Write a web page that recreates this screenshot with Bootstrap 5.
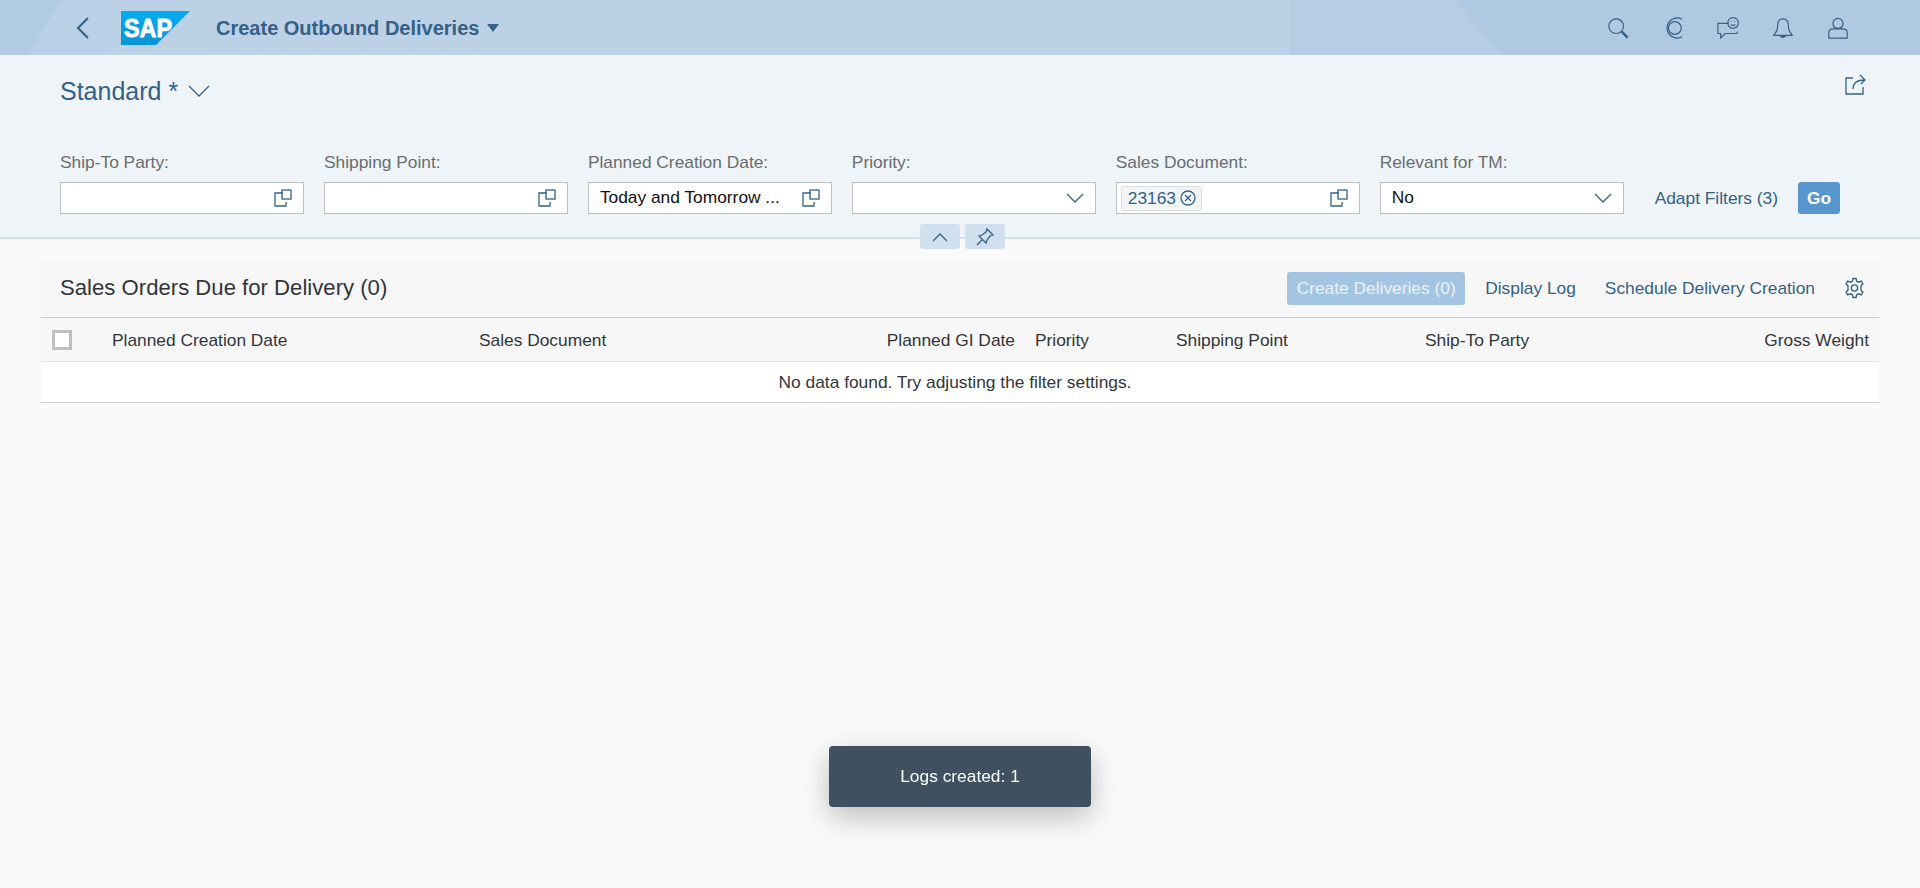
<!DOCTYPE html>
<html lang="en">
  <head>
    <meta charset="UTF-8" />
    <title>Create Outbound Deliveries</title>
    <link href="https://cdn.jsdelivr.net/npm/bootstrap@5.3.0/dist/css/bootstrap.min.css" rel="stylesheet" />
    <style>
      body {
        font-family: "Liberation Sans", Arial, sans-serif;
        font-size: 17.35px;
        background: #fafafa;
        color: #32363a;
        height: 888px;
        overflow: hidden;
      }
      svg { display: block; fill: none; stroke: #346187; stroke-width: 1.3; }
      /* shell */
      .shell-bar {
        height: 55px;
        background:
          linear-gradient(47.7deg, transparent 1112px, #b0c9e2 1112px),
          linear-gradient(121deg, #b1cbe3 52px, transparent 52px),
          linear-gradient(90deg, #bad0e6 106px, transparent 106px, transparent 1290px, #b7cde4 1290px),
          #bdd1e6;
      }
      .shell-back { margin-left: 73px; width: 20px; }
      .shell-logo { margin-left: 28px; width: 69px; }
      .shell-title { margin-left: 26px; font-size: 20px; font-weight: 700; color: #346187; }
      .shell-caret { margin-left: 8px; width: 0; height: 0; border: 6px solid transparent; border-top: 8px solid #346187; border-bottom: 0; }
      .shell-icons { margin-left: auto; margin-right: 71px; gap: 33px; }
      .shell-icons svg { width: 22px; height: 22px; }
      /* filter bar */
      .filter-bar { height: 184px; padding: 0 80px 0 60px; background: #eff4f9; border-bottom: 2px solid #d1e0ef; position: relative; }
      .variant-row { height: 70px; padding-top: 19px; }
      .variant-name { font-size: 25px; color: #346187; line-height: 34px; }
      .variant-caret { margin: 10px 0 0 10px; }
      .share-btn { margin-left: auto; margin-right: -26px; }
      .filter-row { margin-top: 24px; gap: 20px; }
      .filter-item { width: 244px; }
      .filter-label { line-height: 26px; color: #6a6d70; height: 33px; }
      .filter-box { height: 32px; background: #fff; border: 1px solid #bfbfbf; padding: 0 11px 0 11px; color: #111; }
      .filter-box svg { margin-left: auto; flex: none; }
      .filter-value { margin-top: -2px; }
      .token { height: 25px; margin-left: -7px; padding: 0 5px 0 6px; background: #f2f5f8; border: 1px solid #dcdfe2; border-radius: 2px; color: #346187; gap: 4px; }
      .token svg { margin-left: 0; }
      .filters-link { color: #346187; margin-left: 11px; margin-top: 33px; height: 32px; line-height: 32px; white-space: nowrap; }
      .go-btn { margin-top: 33px; width: 42px; height: 32px; padding: 0; background: #5496cd; border: 1px solid #5496cd; color: #fff; font-size: 17.35px; font-weight: 700; border-radius: 3px; }
      .collapse-tools { position: absolute; left: 920px; top: 169px; gap: 5px; }
      .collapse-tool { width: 40px; height: 25px; background: #d1e0ef; border-radius: 3px; }
      /* table */
      .result-panel { margin: 20px 41px 0; }
      .result-toolbar { height: 59px; background: #f7f7f7; padding: 0 14px 0 19px; border-bottom: 1px solid #c8c8c8; }
      .result-title { font-size: 22.15px; color: #32363a; margin-top: -1px; }
      .result-actions { margin-left: auto; }
      .create-btn { height: 33px; width: 178px; padding: 0; background: #a3c5e1; border: 1px solid #a3c5e1; color: #eaf2f8; font-size: 17.35px; border-radius: 3px; }
      .result-link { color: #346187; margin-left: 20px; }
      .result-link-wide { margin-left: 29px; }
      .gear-wrap { margin-left: 29px; }
      .result-table { table-layout: fixed; width: 1838px; margin: 0; }
      .result-table th, .result-table td { height: 43px; padding: 2px 12px 0; vertical-align: middle; font-weight: 400; font-size: 17.35px; color: #32363a; }
      .result-table th { background: #f7f7f7; border-bottom: 1px solid #e5e5e5; }
      .result-table td { height: 41px; padding-right: 22px; background: #fff; text-align: center; border-bottom: 1px solid #d0d0d0; }
      .result-table th.col-date { padding-right: 8px; text-align: right; }
      .result-table th.col-weight { padding-right: 10px; text-align: right; }
      .result-table th.col-check { padding-left: 11px; }
      .check-box { width: 20px; height: 20px; background: #fff; border: 3px solid #bfbfbf; }
      /* toast */
      .log-toast { position: fixed; left: 829px; top: 746px; width: 262px; height: 61px; background: #3f5161; color: #fff; border-radius: 4px; box-shadow: 0 10px 30px rgba(0,0,0,.25); }
    </style>
  </head>
  <body>
    <!-- Shell header -->
    <header class="shell-bar d-flex align-items-center">
      <div class="shell-back">
        <svg width="18" height="24" viewBox="0 0 18 24" style="stroke-width:2.2"><path d="M15 2 L5 12 L15 22" /></svg>
      </div>
      <div class="shell-logo">
        <svg width="69" height="34" viewBox="0 0 69 34" style="stroke:none">
          <defs>
            <linearGradient id="sapBlue" x1="0" y1="0" x2="0" y2="1">
              <stop offset="0" stop-color="#00aeef" />
              <stop offset="1" stop-color="#0a92d6" />
            </linearGradient>
          </defs>
          <polygon points="0,0 69,0 35,34 0,34" fill="url(#sapBlue)" />
          <text x="3" y="26" font-family="Liberation Sans" font-weight="700" font-size="25" fill="#fff" stroke="#fff" stroke-width="0.9" textLength="48" lengthAdjust="spacingAndGlyphs">SAP</text>
        </svg>
      </div>
      <span class="shell-title">Create Outbound Deliveries</span>
      <span class="shell-caret"></span>
      <div class="shell-icons d-flex">
        <svg viewBox="0 0 24 24"><circle cx="10" cy="10" r="8" /><path d="M16 16 L22.5 22.5" style="stroke-width:2.6" /></svg>
        <svg viewBox="0 0 24 24"><path d="M22 2.5 A11 11 0 1 0 22 21.5" /><circle cx="14" cy="12" r="7" /></svg>
        <svg viewBox="0 0 24 24"><path d="M13 7 H1 V18 H4 V23 L9 18 H22 V16" /><circle cx="17.5" cy="6.5" r="5.8" /><path d="M15 8 Q17.5 10.5 20 8 M15.5 4.5 V5.5 M19.5 4.5 V5.5" /></svg>
        <svg viewBox="0 0 24 24"><path d="M12 2 C6 2 6 8 6 12 C6 15 4 17 2 20 H22 C20 17 18 15 18 12 C18 8 18 2 12 2 Z" /><path d="M9 20.5 Q12 24 15 20.5 Z" fill="#346187" /></svg>
        <svg viewBox="0 0 24 24"><circle cx="12" cy="7" r="5.5" /><path d="M2 23 V17 Q2 13 7 13 H17 Q22 13 22 17 V23 Z" /></svg>
      </div>
    </header>

    <!-- Filter bar -->
    <section class="filter-bar">
      <div class="variant-row d-flex">
        <span class="variant-name">Standard *</span>
        <svg class="variant-caret" width="22" height="14" viewBox="0 0 22 14"><path d="M1 2 L11 12 L21 2" /></svg>
        <svg class="share-btn" width="21" height="21" viewBox="0 0 21 21"><path d="M8 4 H1 V20 H18 V13" /><path d="M8 15 C8 9 12 6 20 6 M15 1 L20 6 L16 10" /></svg>
      </div>
      <div class="filter-row d-flex align-items-start">
        <div class="filter-item">
          <div class="filter-label">Ship-To Party:</div>
          <div class="filter-box d-flex align-items-center">
            <svg width="18" height="18" viewBox="0 0 18 18"><path d="M9 4 H1 V17 H12 V13" /><rect x="8" y="1" width="9" height="9" /></svg>
          </div>
        </div>
        <div class="filter-item">
          <div class="filter-label">Shipping Point:</div>
          <div class="filter-box d-flex align-items-center">
            <svg width="18" height="18" viewBox="0 0 18 18"><path d="M9 4 H1 V17 H12 V13" /><rect x="8" y="1" width="9" height="9" /></svg>
          </div>
        </div>
        <div class="filter-item">
          <div class="filter-label">Planned Creation Date:</div>
          <div class="filter-box d-flex align-items-center">
            <span class="filter-value">Today and Tomorrow ...</span>
            <svg width="18" height="18" viewBox="0 0 18 18"><path d="M9 4 H1 V17 H12 V13" /><rect x="8" y="1" width="9" height="9" /></svg>
          </div>
        </div>
        <div class="filter-item">
          <div class="filter-label">Priority:</div>
          <div class="filter-box d-flex align-items-center">
            <svg width="18" height="12" viewBox="0 0 18 12"><path d="M1 2 L9 10 L17 2" /></svg>
          </div>
        </div>
        <div class="filter-item">
          <div class="filter-label">Sales Document:</div>
          <div class="filter-box d-flex align-items-center">
            <span class="token d-flex align-items-center">23163
              <svg width="16" height="16" viewBox="0 0 16 16"><circle cx="8" cy="8" r="7" /><path d="M5 5 L11 11 M11 5 L5 11" /></svg>
            </span>
            <svg width="18" height="18" viewBox="0 0 18 18"><path d="M9 4 H1 V17 H12 V13" /><rect x="8" y="1" width="9" height="9" /></svg>
          </div>
        </div>
        <div class="filter-item">
          <div class="filter-label">Relevant for TM:</div>
          <div class="filter-box d-flex align-items-center">
            <span class="filter-value">No</span>
            <svg width="18" height="12" viewBox="0 0 18 12"><path d="M1 2 L9 10 L17 2" /></svg>
          </div>
        </div>
        <span class="filters-link">Adapt Filters (3)</span>
        <button class="go-btn btn" type="button">Go</button>
      </div>
      <div class="collapse-tools d-flex">
        <div class="collapse-tool d-flex align-items-center justify-content-center">
          <svg width="16" height="10" viewBox="0 0 16 10"><path d="M1 9 L8 2 L15 9" /></svg>
        </div>
        <div class="collapse-tool d-flex align-items-center justify-content-center">
          <svg width="18" height="18" viewBox="0 0 18 18"><path d="M11 1 L17 7 L14 8 L11 12 L10 15 L3 8 L6 7 L10 4 Z M6 12 L1 17" /></svg>
        </div>
      </div>
    </section>

    <!-- Result table -->
    <main class="result-panel">
      <div class="result-toolbar d-flex align-items-center">
        <span class="result-title">Sales Orders Due for Delivery (0)</span>
        <div class="result-actions d-flex align-items-center">
          <button class="create-btn btn" type="button">Create Deliveries (0)</button>
          <span class="result-link">Display Log</span>
          <span class="result-link result-link-wide">Schedule Delivery Creation</span>
          <span class="gear-wrap">
            <svg width="21" height="22" viewBox="0 0 20 20"><circle cx="10" cy="10" r="3" /><path d="M8.5 1 H11.5 L12 3.5 L14 4.5 L16.5 3.5 L18 6 L16.2 8 V12 L18 14 L16.5 16.5 L14 15.5 L12 16.5 L11.5 19 H8.5 L8 16.5 L6 15.5 L3.5 16.5 L2 14 L3.8 12 V8 L2 6 L3.5 3.5 L6 4.5 L8 3.5 Z" /></svg>
          </span>
        </div>
      </div>
      <table class="table result-table">
        <colgroup>
          <col style="width: 59px" /><col style="width: 367px" /><col style="width: 353px" /><col style="width: 203px" /><col style="width: 141px" /><col style="width: 249px" /><col style="width: 227px" /><col style="width: 239px" />
        </colgroup>
        <thead>
          <tr>
            <th class="col-check"><div class="check-box"></div></th>
            <th>Planned Creation Date</th>
            <th>Sales Document</th>
            <th class="col-date">Planned GI Date</th>
            <th>Priority</th>
            <th>Shipping Point</th>
            <th>Ship-To Party</th>
            <th class="col-weight">Gross Weight</th>
          </tr>
        </thead>
        <tbody>
          <tr><td colspan="8">No data found. Try adjusting the filter settings.</td></tr>
        </tbody>
      </table>
    </main>

    <div class="log-toast d-flex align-items-center justify-content-center">Logs created: 1</div>

    <script src="https://cdn.jsdelivr.net/npm/bootstrap@5.3.0/dist/js/bootstrap.bundle.min.js"></script>
  </body>
</html>
